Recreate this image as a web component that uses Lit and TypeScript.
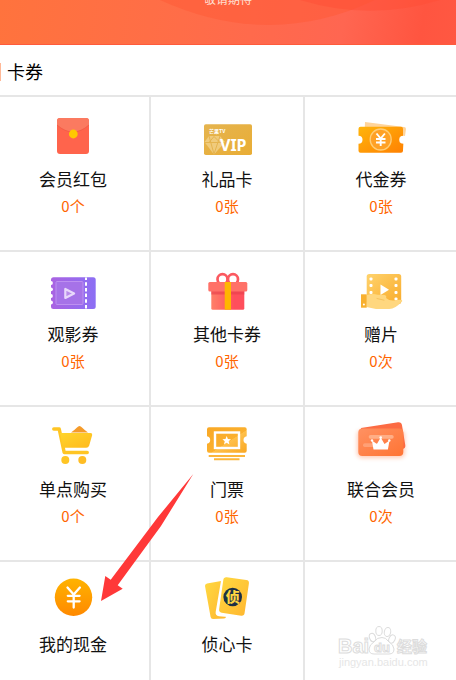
import { LitElement, html, css, svg, nothing } from "lit";
import { customElement, property } from "lit/decorators.js";

const icons: Record<string, unknown> = {
  envelope: svg`
    <rect x="14" y="8" width="32" height="36" rx="3" fill="#ff644c"/>
    <path d="M14 15V11a3 3 0 0 1 3-3h26a3 3 0 0 1 3 3v4Q38 22 30 22T14 15z" fill="#fb7a60"/>
    <path d="M14 15Q22 22 30 22T46 15" fill="none" stroke="#ef5743" stroke-width=".7"/>
    <circle cx="30.3" cy="24" r="4.4" fill="#ffc800"/>`,
  vip: svg`
    <defs><linearGradient id="g" x2="1" y2="1"><stop stop-color="#e5b44f"/><stop offset="1" stop-color="#e9ad35"/></linearGradient></defs>
    <rect x="7" y="14.3" width="48" height="30.7" rx="1.8" fill="url(#g)"/>
    <path d="M7.500 32L12 26h11l5 6L17 44.500z" fill="#f0cb7c"/>
    <path d="M7 32.500h21M12 26l5 18 6-18M12 32.500l5-6 6 6" fill="none" stroke="#e5b44f"/>
    <text class="brand" x="12" y="23">芒果TV</text>
    <text class="vip" x="23" y="41">VIP</text>`,
  coupon: svg`
    <defs><linearGradient id="g" x2="1" y2="1"><stop stop-color="#ffb50b"/><stop offset="1" stop-color="#ff8102"/></linearGradient></defs>
    <path d="M14 12l39 5q2 0 2 2l-3 21-39-5z" fill="#ffd49a"/>
    <circle cx="52.500" cy="29.700" r="4" fill="#fff"/>
    <path d="M9.500 16.700h40.500q2 0 2 2v7a4 4 0 0 0 0 8v7q0 2-2 2H9.500q-2 0-2-2v-7a4 4 0 0 0 0-8v-7q0-2 2-2z" fill="url(#g)"/>
    <circle cx="29.700" cy="29.500" r="10.500" fill="#ffa126" stroke="#ffcd76" stroke-width="1.300"/>
    <path d="M25.500 23.500l4.200 5 4.200-5M29.700 28.500v7.500M25 29h9.500M25 32.500h9.500" fill="none" stroke="#fff" stroke-width="1.900"/>`,
  movie: svg`
    <defs><linearGradient id="g" x2="1"><stop stop-color="#a963e2"/><stop offset="1" stop-color="#8c6ff4"/></linearGradient></defs>
    <rect x="8" y="12.300" width="44.700" height="31.700" rx="2.500" fill="url(#g)"/>
    <g fill="#fff"><circle cx="8" cy="18" r="1.900"/><circle cx="8" cy="24.300" r="1.900"/><circle cx="8" cy="31" r="1.900"/><circle cx="8" cy="37.500" r="1.900"/></g>
    <rect x="13" y="16.500" width="27" height="23" rx="1" fill="#a672e8" stroke="#bd90f0"/>
    <path d="M43 12.500V44" stroke="#fff" stroke-width="2" stroke-dasharray="3.500 2.200" stroke-dashoffset="1"/>
    <path d="M22.300 24v9l8.800-4.500z" fill="#b98bea" stroke="#e8d8fb" stroke-width="2.200" stroke-linejoin="round"/>`,
  gift: svg`
    <defs><linearGradient id="g" x2="1"><stop stop-color="#ff8068"/><stop offset=".7" stop-color="#ff4f5c"/></linearGradient></defs>
    <circle cx="25.500" cy="14.200" r="5" fill="#fff" stroke="#fb5960" stroke-width="2.700"/>
    <circle cx="36" cy="14.200" r="5" fill="#fff" stroke="#fb5960" stroke-width="2.700"/>
    <rect x="14.300" y="24" width="33" height="20.700" rx="1.500" fill="url(#g)"/>
    <path d="M14.300 26h33v3.500h-33z" fill="#e8404b" opacity=".65"/>
    <rect x="11.300" y="17" width="39" height="9.500" rx="1.500" fill="#ff7168"/>
    <path d="M27.700 17H34v27.700h-6.300z" fill="#ffb600"/>`,
  film: svg`
    <defs><linearGradient id="g" x2="1" y2="1"><stop stop-color="#ffd36d"/><stop offset="1" stop-color="#f9ab2b"/></linearGradient></defs>
    <rect x="15.700" y="9" width="34.500" height="30" rx="2.500" fill="url(#g)"/>
    <g fill="#fff"><rect x="18.500" y="12.500" width="3" height="3" rx="1"/><rect x="18.500" y="19" width="3" height="3" rx="1"/><rect x="18.500" y="26" width="3" height="3" rx="1"/><rect x="43.500" y="12.500" width="3" height="3" rx="1"/><rect x="43.500" y="19" width="3" height="3" rx="1"/><rect x="43.500" y="26" width="3" height="3" rx="1"/><rect x="43.500" y="32.500" width="3" height="3" rx="1"/><path d="M29.500 19.500l8.500 5.300-8.500 5.200z"/></g>
    <path d="M15.500 30.300q6-2.300 11-.6l7 .3q2.500.7 1.500 3 3.500 3 8 2.500l5.500-.7q3-.1 2.800 1.200-7 8-13 8H25l-9.500-2z" fill="#ffd77f"/>
    <path d="M26 33.500l7 1.700" stroke="#f6c25e" stroke-linecap="round"/>
    <path d="M10 29.300h5.700v13.400H10z" fill="#f8b02f"/><circle cx="12.900" cy="39.500" r="1" fill="#fff"/>`,
  cart: svg`
    <defs><linearGradient id="g" x2="1" y2="1"><stop stop-color="#ffd52c"/><stop offset="1" stop-color="#ffb91d"/></linearGradient></defs>
    <path d="M28 12.500q3-2 6-5 2.500-3 5 0 3 3 6 5z" fill="#f59b2a"/>
    <path d="M10.800 9h5.400l5 23.500h23" fill="none" stroke="#ffc524" stroke-width="3.500" stroke-linecap="round" stroke-linejoin="round"/>
    <path d="M17 13h30.500q2 0 1.700 2l-3 10.500q-.7 2.300-3 2.300H20z" fill="url(#g)"/>
    <circle cx="22.300" cy="40" r="4" fill="#ffc524"/><circle cx="39.300" cy="40" r="4" fill="#ffbd24"/>`,
  ticket: svg`
    <defs><linearGradient id="g" x2="1" y2="1"><stop stop-color="#f9a825"/><stop offset=".55" stop-color="#fbb02e"/><stop offset=".56" stop-color="#ffc04a"/><stop offset="1" stop-color="#f9a723"/></linearGradient></defs>
    <path d="M12 7.300h35.700q2 0 2 2v7a3.800 3.800 0 0 0 0 7.500v7q0 2-2 2H12q-2 0-2-2v-7a3.800 3.800 0 0 0 0-7.500v-7q0-2 2-2z" fill="url(#g)"/>
    <rect x="18" y="12.500" width="24" height="15.500" fill="none" stroke="#fff" stroke-width="2.400"/>
    <path d="M29.700 16l1.200 2.900 3.100.3-2.300 2.100.7 3.100-2.700-1.600-2.700 1.600.7-3.100-2.300-2.100 3.100-.3z" fill="#fff"/>
    <path d="M11.700 36H48M17 39.200h25.500" stroke="#fcb63c" stroke-width="1.900"/>`,
  crown: svg`
    <defs><linearGradient id="g" x2="1" y2="1"><stop stop-color="#ff9162"/><stop offset="1" stop-color="#ff7434"/></linearGradient>
    <filter id="s" x="-20%" y="-30%" width="140%" height="160%"><feGaussianBlur stdDeviation="2"/></filter></defs>
    <rect x="6" y="10" width="48" height="28" rx="5" fill="#ff8250" opacity=".4" filter="url(#s)"/>
    <path d="M10 8L47 2.300q3.500-.4 4 3l3.300 20q.4 3-2.600 3.700L13 34z" fill="#fc6b43"/>
    <rect x="7.300" y="8.500" width="45" height="27.500" rx="4" fill="url(#g)"/>
    <rect x="17.700" y="15" width="25" height="3.700" rx="1.800" fill="#ffae86"/><rect x="12" y="23.300" width="18" height="3.700" rx="1.800" fill="#ffa076"/>
    <path d="M22.500 29.500l-1.600-9 5 3.500 3.800-6.500 3.800 6.500 5-3.500-1.600 9z" fill="#fff"/>
    <g fill="#fff"><circle cx="21" cy="20.500" r="1.200"/><circle cx="29.700" cy="17.500" r="1.300"/><circle cx="38.300" cy="20.500" r="1.200"/></g>`,
  coin: svg`
    <defs><linearGradient id="g" x2="0" y2="1"><stop stop-color="#ffb300"/><stop offset="1" stop-color="#ff8900"/></linearGradient></defs>
    <circle cx="30.500" cy="22.300" r="18.700" fill="url(#g)"/>
    <path d="M24.500 12.500l6.200 7 6.200-7M30.700 19.500v13M24.800 20.800h11.800M24.800 26.300h11.800" fill="none" stroke="#fff" stroke-width="2.300" stroke-linecap="round" stroke-linejoin="round"/>`,
  cards: svg`
    <defs><linearGradient id="g" x2="1" y2="1"><stop stop-color="#ffd941"/><stop offset="1" stop-color="#ffb62f"/></linearGradient></defs>
    <path d="M10 8.500l17-3q2-.2 2 2v34q0 2-2 2l-11 .4q-2 0-2.400-2L8 11q-.2-2 2-2.500z" fill="url(#g)"/>
    <path d="M24.500 3q.3-3 3.300-2.600l20.500 2.800q4 .5 3.400 4.500l-4.800 32q-.6 4-4.600 3.400L22 41.200q-4-.7-3.300-4.500z" fill="#fff"/>
    <path d="M26.300 5q.4-3 3.400-2.700l19.600 2.800q3 .4 2.600 3.400l-4.300 29.500q-.4 3-3.400 2.700l-19.500-3q-3-.4-2.600-3.400z" fill="url(#g)"/>
    <circle cx="35.700" cy="22" r="9.300" fill="#1c3045"/>
    <text class="seal" x="35.700" y="26.500" text-anchor="middle">侦</text>`,
};

const benefits = [
  { icon: "envelope", name: "会员红包", count: "0个" },
  { icon: "vip", name: "礼品卡", count: "0张" },
  { icon: "coupon", name: "代金券", count: "0张" },
  { icon: "movie", name: "观影券", count: "0张" },
  { icon: "gift", name: "其他卡券", count: "0张" },
  { icon: "film", name: "赠片", count: "0次" },
  { icon: "cart", name: "单点购买", count: "0个" },
  { icon: "ticket", name: "门票", count: "0张" },
  { icon: "crown", name: "联合会员", count: "0次" },
  { icon: "coin", name: "我的现金", count: "" },
  { icon: "cards", name: "侦心卡", count: "" },
];

@customElement("benefit-cell")
export class BenefitCell extends LitElement {
  @property() icon = "";
  @property() name = "";
  @property() count = "";

  static styles = css`
    :host { display: block; }
    .cell { display: flex; flex-direction: column; align-items: center; color: #111; text-decoration: none; }
    .icon { display: block; width: 60px; height: 50px; overflow: visible; }
    .name { margin-top: 7px; font-size: 17px; line-height: 24px; }
    .count { margin-top: 5px; font-size: 15px; line-height: 20px; color: #ff6600; }
    .vip { font: 700 16px "Noto Sans", sans-serif; fill: #fff; }
    .brand { font: 700 5px "Noto Sans CJK SC", sans-serif; fill: #fff; }
    .seal { font: 900 14px "Noto Sans CJK SC", sans-serif; fill: #ffd541; }
  `;

  render() {
    return html`<a class="cell" href="#">
      <svg class="icon" viewBox="0 0 60 50" aria-hidden="true">${icons[this.icon]}</svg>
      <span class="name">${this.name}</span>
      ${this.count ? html`<span class="count">${this.count}</span>` : nothing}
    </a>`;
  }
}

@customElement("app-root")
export class AppRoot extends LitElement {
  static styles = css`
    :host {
      display: flex; flex-direction: column; min-height: 100vh; position: relative;
      overflow: hidden; background: #fff; color: #111;
      font-family: "Noto Sans CJK SC", sans-serif;
    }
    .banner {
      position: relative; height: 45px; overflow: hidden; display: flex; justify-content: center; align-items: flex-end;
      background: linear-gradient(100deg, #ff733d 0%, #ff6d48 40%, #ff6651 75%, #ff5540 92%, #ff5842 100%);
      border-bottom: 1px solid #ff5b3c; box-sizing: border-box;
    }
    .waves { position: absolute; inset: 0; width: 100%; height: 100%; }
    .notice { position: relative; margin: 0 0 37px; font-size: 12px; line-height: 16px; color: #ffe0d5; }
    .heading { display: flex; align-items: center; height: 50px; box-sizing: border-box; padding-top: 4px; }
    .mark { width: 1px; height: 18px; background: #ffb897; }
    .title { margin: 0 0 2px 6px; font-size: 18px; line-height: 26px; font-weight: 400; color: #000; }
    .grid { flex: 1; display: grid; grid-template-columns: repeat(3, 1fr); grid-template-rows: repeat(3, 155px) 1fr; margin: 0 -3px; }
    .item { box-sizing: border-box; padding: 13px 0 16px; border-top: 2px solid #e6e6e6; border-right: 2px solid #e6e6e6; }
    .arrow { position: absolute; left: 100px; top: 472px; width: 96px; height: 132px; pointer-events: none; }
    .watermark { position: absolute; right: 20px; bottom: 8px; width: 100px; height: 48px; pointer-events: none; }
    .wm { fill: #fff; stroke: #dcdcdc; stroke-width: 1px; }
    .latin { font: 700 20px "Liberation Sans", sans-serif; }
    .du { font: 700 13px "Liberation Sans", sans-serif; }
    .han { font: 700 15px "Noto Sans CJK SC", sans-serif; }
    .url { font: 400 11px "Liberation Sans", sans-serif; fill: #e6e6e6; }
  `;

  render() {
    return html`
      <header class="banner">
        <svg class="waves" viewBox="0 0 456 45" preserveAspectRatio="none" aria-hidden="true">
          <path d="M160 0Q270 51 375 0z" fill="#ff5a35" opacity=".5"/>
          <path d="M300 0Q370 22 440 0z" fill="#ff4e35" opacity=".45"/>
        </svg>
        <p class="notice">敬请期待</p>
      </header>
      <div class="heading"><span class="mark"></span><h1 class="title">卡券</h1></div>
      <main class="grid">
        ${benefits.map((b) => html`<benefit-cell class="item" .icon=${b.icon} .name=${b.name} .count=${b.count}></benefit-cell>`)}
        <div class="item"></div>
      </main>
      <svg class="arrow" viewBox="100 472 96 132" aria-hidden="true">
        <path d="M101 601l4.300-25 5.400 3.700L158 517 193.300 474 161 526 117.700 585.300l5 3.400z" fill="#ff3838"/>
      </svg>
      <svg class="watermark" viewBox="336 624 100 48" role="img" aria-label="Baidu 经验">
        <text class="wm latin" x="338" y="653">Bai</text>
        <g class="wm">
          <ellipse cx="372.500" cy="637.500" rx="3" ry="4.300" transform="rotate(-20 372.500 637.500)"/>
          <ellipse cx="379" cy="631" rx="3.200" ry="4.500"/>
          <ellipse cx="387.500" cy="632" rx="3.200" ry="4.500" transform="rotate(12 387.500 632)"/>
          <ellipse cx="392" cy="639" rx="3" ry="4.300" transform="rotate(25 392 639)"/>
          <path d="M382 637.500q4 0 6 3.500 6 4 6 8 0 5-5 5h-15q-5 0-5-5 0-4 6-8 2-3.500 7-3.500z"/>
        </g>
        <text class="wm du" x="374" y="652">du</text>
        <text class="wm han" x="397" y="652">经验</text>
        <text class="url" x="339" y="666">jingyan.baidu.com</text>
      </svg>
    `;
  }
}
